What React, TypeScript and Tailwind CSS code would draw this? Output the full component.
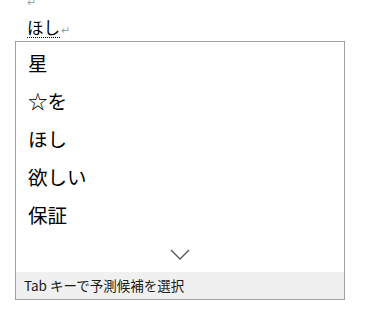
export default function App() {
  const items = ["星", "☆を", "ほし", "欲しい", "保証"];
  const font = { fontFamily: '"Noto Sans CJK JP", "Noto Sans", sans-serif' } as const;
  return (
    <div className="w-[367px] h-[313px] bg-white overflow-hidden flex flex-col" style={font}>
      <div className="pl-[27px] h-[41px] shrink-0 flex flex-col text-[16.5px] leading-none text-black">
        <div className="h-[8px] text-[11px] leading-[8px] text-gray-400 -mt-[3px]">↵</div>
        <div className="mt-[13px] flex items-end">
          <span className="border-b border-dotted border-black pb-[1px] leading-[18px]">ほし</span>
          <span className="text-[11px] text-gray-400 leading-[14px] mb-[2px] ml-[1px]">↵</span>
        </div>
      </div>
      <div className="ml-[15px] w-[330px] h-[259px] shrink-0 border border-[#a0a0a0] bg-white flex flex-col">
        <div className="pt-[2px] flex flex-col">
          {items.map((t) => (
            <div key={t} className="h-[38px] flex items-center pl-[12px] text-[19.5px] text-black leading-none">
              {t}
            </div>
          ))}
        </div>
        <div className="h-[38px] flex items-center justify-center">
          <svg width="20" height="11" viewBox="0 0 20 11" className="mt-[2px]">
            <path d="M1 1 L10 10 L19 1" fill="none" stroke="#555" strokeWidth="1.3" />
          </svg>
        </div>
        <div className="flex-1 bg-[#f0f0f0] flex items-center pl-[8px] text-[13.5px] text-[#1a1a1a] leading-none">
          Tab キーで予測候補を選択
        </div>
      </div>
    </div>
  );
}
